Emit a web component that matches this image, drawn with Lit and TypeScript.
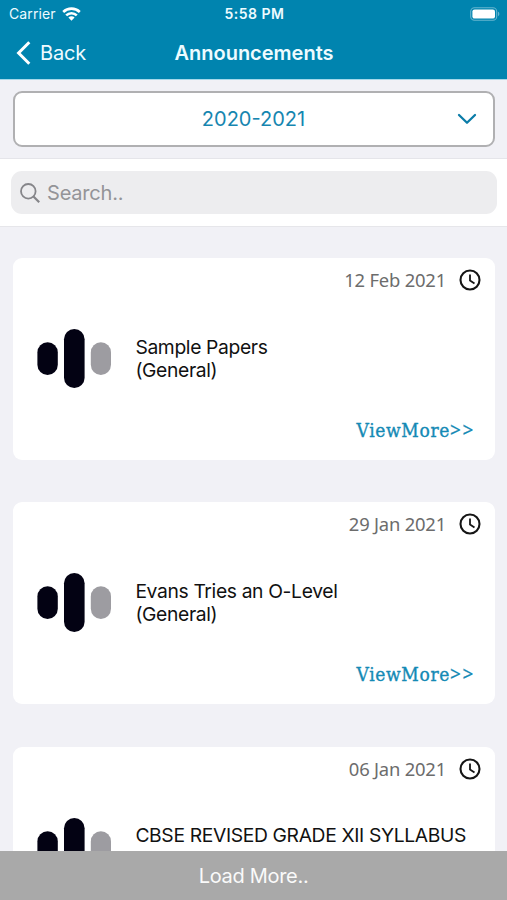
import { LitElement, html, css, svg } from "lit";
import { customElement, property } from "lit/decorators.js";

interface Announcement {
  date: string;
  title: string;
  category: string;
}

const ANNOUNCEMENTS: Announcement[] = [
  { date: "12 Feb 2021", title: "Sample Papers", category: "(General)" },
  { date: "29 Jan 2021", title: "Evans Tries an O-Level", category: "(General)" },
  { date: "06 Jan 2021", title: "CBSE REVISED GRADE XII SYLLABUS", category: "(General)" },
];

const bars = svg`
  <rect x="0.4" y="13.3" width="20.4" height="32.6" rx="10.2" fill="#030213"/>
  <rect x="27" y="0" width="20.6" height="59" rx="10.3" fill="#030213"/>
  <rect x="53.8" y="13.3" width="20.2" height="32.6" rx="10.1" fill="#9d9ca1"/>`;

@customElement("announcement-card")
export class AnnouncementCard extends LitElement {
  @property({ attribute: false }) item!: Announcement;

  static styles = css`
    :host {
      display: flex;
      flex-direction: column;
      height: 202px;
      flex: none;
      background: #fff;
      border-radius: 9px;
      box-sizing: border-box;
      padding: 10px 13px 15px 24px;
    }
    .top {
      display: flex;
      justify-content: flex-end;
      align-items: center;
      height: 24px;
      gap: 12px;
    }
    .date {
      font: 18.4px/24px "Noto Sans", sans-serif;
      letter-spacing: -0.2px;
      color: #6c6c6c;
      white-space: nowrap;
    }
    .clock {
      display: block;
      width: 24px;
      height: 24px;
    }
    .body {
      display: flex;
      align-items: center;
      flex: 1;
      gap: 23.4px;
      padding-top: 10px;
    }
    .bars {
      display: block;
      flex: none;
      width: 75px;
      height: 59px;
    }
    .text {
      font: 19.3px/23.5px Inter, sans-serif;
      letter-spacing: -0.36px;
      color: #111;
      white-space: nowrap;
      padding-top: 1px;
    }
    .more {
      display: flex;
      justify-content: flex-end;
      align-items: center;
      height: 30px;
      padding-right: 7px;
      font: 19px/30px "DejaVu Serif Condensed", "DejaVu Serif", serif;
      letter-spacing: 0.65px;
      -webkit-text-stroke: 0.35px #158ab5;
      color: #158ab5;
    }
    .arrows {
      font: 19px/30px "Noto Sans", sans-serif;
      letter-spacing: 1.6px;
      -webkit-text-stroke: 0.2px #158ab5;
    }
  `;

  render() {
    return html`
      <div class="top">
        <span class="date">${this.item.date}</span>
        <svg class="clock" viewBox="0 0 24 24" fill="none" stroke="#151515">
          <circle cx="12" cy="12" r="9.5" stroke-width="2.1" />
          <path d="M12 6.4V12.4L16.5 15.4" stroke-width="1.8" />
        </svg>
      </div>
      <div class="body">
        <svg class="bars" viewBox="0 0 75 59">${bars}</svg>
        <div class="text">
          <div>${this.item.title}</div>
          <div>${this.item.category}</div>
        </div>
      </div>
      <div class="more"><span>ViewMore</span><span class="arrows">&gt;&gt;</span></div>
    `;
  }
}

@customElement("app-root")
export class AppRoot extends LitElement {
  static styles = css`
    :host {
      display: flex;
      flex-direction: column;
      height: 900px;
      overflow: hidden;
      background: #f1f1f6;
      font-family: Inter, sans-serif;
    }
    svg {
      display: block;
      flex: none;
    }
    .header {
      flex: none;
      height: 79px;
      background: #0084af;
      color: #eefbff;
      border-bottom: 1px solid #a5d9ea;
    }
    .status {
      display: grid;
      grid-template-columns: 1fr auto 1fr;
      align-items: center;
      height: 27px;
      padding: 0 7px 0 9px;
    }
    .carrier {
      display: flex;
      align-items: center;
      gap: 6px;
      font-size: 14px;
      letter-spacing: 0.1px;
    }
    .time {
      font-size: 14px;
      font-weight: 600;
      letter-spacing: 0.5px;
    }
    .battery {
      justify-self: end;
    }
    .nav {
      display: grid;
      grid-template-columns: 1fr auto 1fr;
      align-items: center;
      height: 51px;
      padding: 0 15px 0 16px;
    }
    .back {
      display: flex;
      align-items: center;
      gap: 9px;
      font-size: 20px;
      letter-spacing: -0.2px;
    }
    .title {
      font-size: 20px;
      font-weight: 600;
    }
    .picker {
      flex: none;
      height: 79px;
      box-sizing: border-box;
      padding: 11px 12px 12px 13px;
      border-bottom: 1px solid #e5e5ea;
    }
    .select {
      display: grid;
      grid-template-columns: 1fr auto 1fr;
      align-items: center;
      height: 56px;
      box-sizing: border-box;
      border: 2px solid #b0b0b2;
      border-radius: 9px;
      background: #fff;
      color: #1686b0;
      padding: 0 16px 0 15px;
      font-size: 20px;
    }
    .year {
      grid-column: 2;
    }
    .chevron {
      justify-self: end;
    }
    .searchbar {
      flex: none;
      height: 68px;
      box-sizing: border-box;
      padding: 12px 10px 12px 11px;
      background: #fff;
      border-bottom: 1px solid #e6e6ea;
    }
    .field {
      display: flex;
      align-items: center;
      gap: 7px;
      height: 43px;
      padding-left: 9px;
      border-radius: 11px;
      background: #ededef;
      color: #949498;
      font-size: 20px;
      letter-spacing: -0.2px;
    }
    .list {
      flex: 1;
      min-height: 0;
      overflow: hidden;
      display: flex;
      flex-direction: column;
      gap: 42.3px;
      padding: 31px 12px 0 13px;
    }
    .load {
      flex: none;
      height: 49px;
      box-sizing: border-box;
      padding-top: 1px;
      display: flex;
      align-items: center;
      justify-content: center;
      background: #a9a9a9;
      color: #fafafa;
      font-size: 20px;
      letter-spacing: -0.3px;
    }
  `;

  render() {
    return html`
      <div class="header">
        <div class="status">
          <div class="carrier">
            <span class="carriername">Carrier</span>
            <svg width="19" height="14" viewBox="0 0 19 14" fill="none" stroke="#fff" stroke-width="2.6">
              <path d="M1.2 5A12 12 0 0 1 17.8 5" />
              <path d="M4.2 8.4A7.6 7.6 0 0 1 14.8 8.4" />
              <path d="M9.5 13.8L6.4 10.6A4.4 4.4 0 0 1 12.6 10.6Z" fill="#fff" stroke="none" />
            </svg>
          </div>
          <span class="time">5:58 PM</span>
          <svg class="battery" width="30" height="14" viewBox="0 0 30 14">
            <rect x="0.7" y="0.7" width="26" height="12.6" rx="3.8" fill="none" stroke="#66b5cf" stroke-width="1.1" />
            <rect x="2.4" y="2.4" width="22.6" height="9.2" rx="2.2" fill="#fff" />
            <path d="M28 4.8C29.8 5.4 29.8 8.6 28 9.2Z" fill="#66b5cf" />
          </svg>
        </div>
        <div class="nav">
          <div class="back">
            <svg width="15" height="24" viewBox="0 0 15 24" fill="none" stroke="#fff" stroke-width="3">
              <path d="M13.3 1.3L2.6 12L13.3 22.7" />
            </svg>
            <span class="backname">Back</span>
          </div>
          <span class="title">Announcements</span>
        </div>
      </div>
      <div class="picker">
        <div class="select">
          <span class="year">2020-2021</span>
          <svg class="chevron" width="20" height="12" viewBox="0 0 20 12" fill="none" stroke="#0b7ca8" stroke-width="2.3" stroke-linecap="round" stroke-linejoin="round">
            <path d="M2 2L10 9.8L18 2" />
          </svg>
        </div>
      </div>
      <div class="searchbar">
        <div class="field">
          <svg width="20" height="20" viewBox="0 0 20 20" fill="none" stroke="#858589" stroke-width="1.8">
            <circle cx="8.3" cy="8.3" r="7.3" />
            <path d="M13.5 13.5L19.2 19.2" stroke-width="2.2" />
          </svg>
          <span class="hint">Search..</span>
        </div>
      </div>
      <div class="list">
        ${ANNOUNCEMENTS.map((a) => html`<announcement-card .item=${a}></announcement-card>`)}
      </div>
      <div class="load"><span>Load More..</span></div>
    `;
  }
}
